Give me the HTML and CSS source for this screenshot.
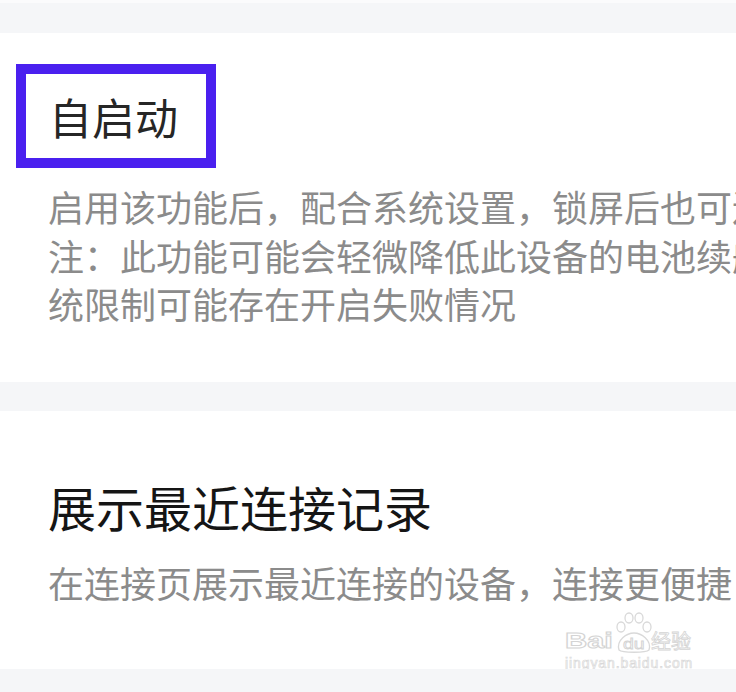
FILE: index.html
```html
<!DOCTYPE html>
<html lang="zh-CN">
<head>
<meta charset="utf-8">
<title>设置</title>
<link rel="stylesheet" href="styles.css">
</head>
<body>
<div class="page">
  <div class="top-strip"></div>
  <div class="band band-top"></div>
  <section class="card card-one">
    <div class="title-box"><h2 class="title title-small">自启动</h2></div>
    <div class="desc desc-one">
      <div class="line">启用该功能后，配合系统设置，锁屏后也可连接</div>
      <div class="line">注：此功能可能会轻微降低此设备的电池续航，部分系</div>
      <div class="line">统限制可能存在开启失败情况</div>
    </div>
  </section>
  <div class="band band-mid"></div>
  <section class="card card-two">
    <h2 class="title title-large">展示最近连接记录</h2>
    <div class="desc desc-two">
      <div class="line">在连接页展示最近连接的设备，连接更便捷</div>
    </div>
    <div class="watermark">
      <svg class="paw" width="42" height="42" viewBox="0 0 42 42">
        <g fill="none" stroke="#d9d9d9" stroke-width="1.3">
          <ellipse cx="8" cy="15" rx="4" ry="5"/>
          <ellipse cx="16" cy="6" rx="4" ry="5"/>
          <ellipse cx="26" cy="6" rx="4" ry="5"/>
          <ellipse cx="34" cy="15" rx="4" ry="5"/>
          <path d="M6 38 C3 28 14 21 21 21 C28 21 39 28 36 38 C33 41 9 41 6 38 Z"/>
        </g>
      </svg>
      <span class="wm-bai">Bai</span>
      <span class="wm-du">du</span>
      <span class="wm-jy">经验</span>
      <span class="wm-url">jingyan.baidu.com</span>
    </div>
  </section>
  <div class="band band-bottom"></div>
</div>
</body>
</html>
```

FILE: styles.css
```css
html, body {
  margin: 0;
  padding: 0;
  background: #ffffff;
}

body {
  width: 736px;
  height: 692px;
  overflow: hidden;
  font-family: "Noto Sans CJK SC", "Noto Sans", sans-serif;
}

.page {
  width: 736px;
  display: flex;
  flex-direction: column;
}

.top-strip {
  height: 3px;
  background: #fbfbfc;
}

.band {
  background: #f5f6f8;
}

.band-top { height: 30px; }
.band-mid { height: 29px; }
.band-bottom { height: 30px; }

.card {
  background: #ffffff;
  box-sizing: border-box;
  position: relative;
  overflow: hidden;
}

.card-one {
  height: 349px;
  padding-top: 31px;
}

.card-two {
  height: 258px;
  padding-top: 65px;
}

.title-box {
  margin-left: 16px;
  width: 200px;
  height: 104px;
  box-sizing: border-box;
  border: 10px solid #4a20ef;
  display: flex;
  align-items: center;
}

.title {
  margin: 0;
  font-weight: 400;
  white-space: nowrap;
}

.title-small {
  font-size: 43px;
  line-height: 84px;
  color: #262626;
  padding-left: 23px;
}

.title-large {
  font-size: 48px;
  line-height: 60px;
  color: #151515;
  padding-left: 48px;
}

.desc {
  padding-left: 48px;
  color: #8b8b8b;
  font-size: 36px;
  line-height: 48.5px;
  white-space: nowrap;
}

.desc-one {
  margin-top: 14px;
}

.desc-two {
  margin-top: 22px;
}

.line {
  white-space: nowrap;
}

.watermark {
  position: absolute;
  left: 560px;
  top: 200px;
  width: 140px;
  height: 60px;
  color: #ffffff;
  font-family: "Liberation Sans", sans-serif;
}

.paw {
  position: absolute;
  left: 53px;
  top: 1px;
}

.wm-bai,
.wm-du,
.wm-jy,
.wm-url {
  position: absolute;
  white-space: nowrap;
  color: #ffffff;
  transform-origin: left top;
}

.wm-bai {
  left: 5px;
  top: 19px;
  font-size: 22px;
  line-height: 22px;
  font-weight: 700;
  -webkit-text-stroke: 1px #d4d4d4;
  transform: scaleX(1.4);
}

.wm-du {
  left: 63px;
  top: 25px;
  font-size: 15px;
  line-height: 15px;
  -webkit-text-stroke: 0.8px #d4d4d4;
  transform: scaleX(1.3);
}

.wm-jy {
  left: 91px;
  top: 19px;
  font-family: "Noto Sans CJK SC", sans-serif;
  font-size: 20px;
  line-height: 22px;
  -webkit-text-stroke: 0.8px #d4d4d4;
}

.wm-url {
  left: 5px;
  top: 45px;
  font-size: 14px;
  line-height: 15px;
  letter-spacing: 0.9px;
  -webkit-text-stroke: 0.7px #d8d8d8;
}
```
